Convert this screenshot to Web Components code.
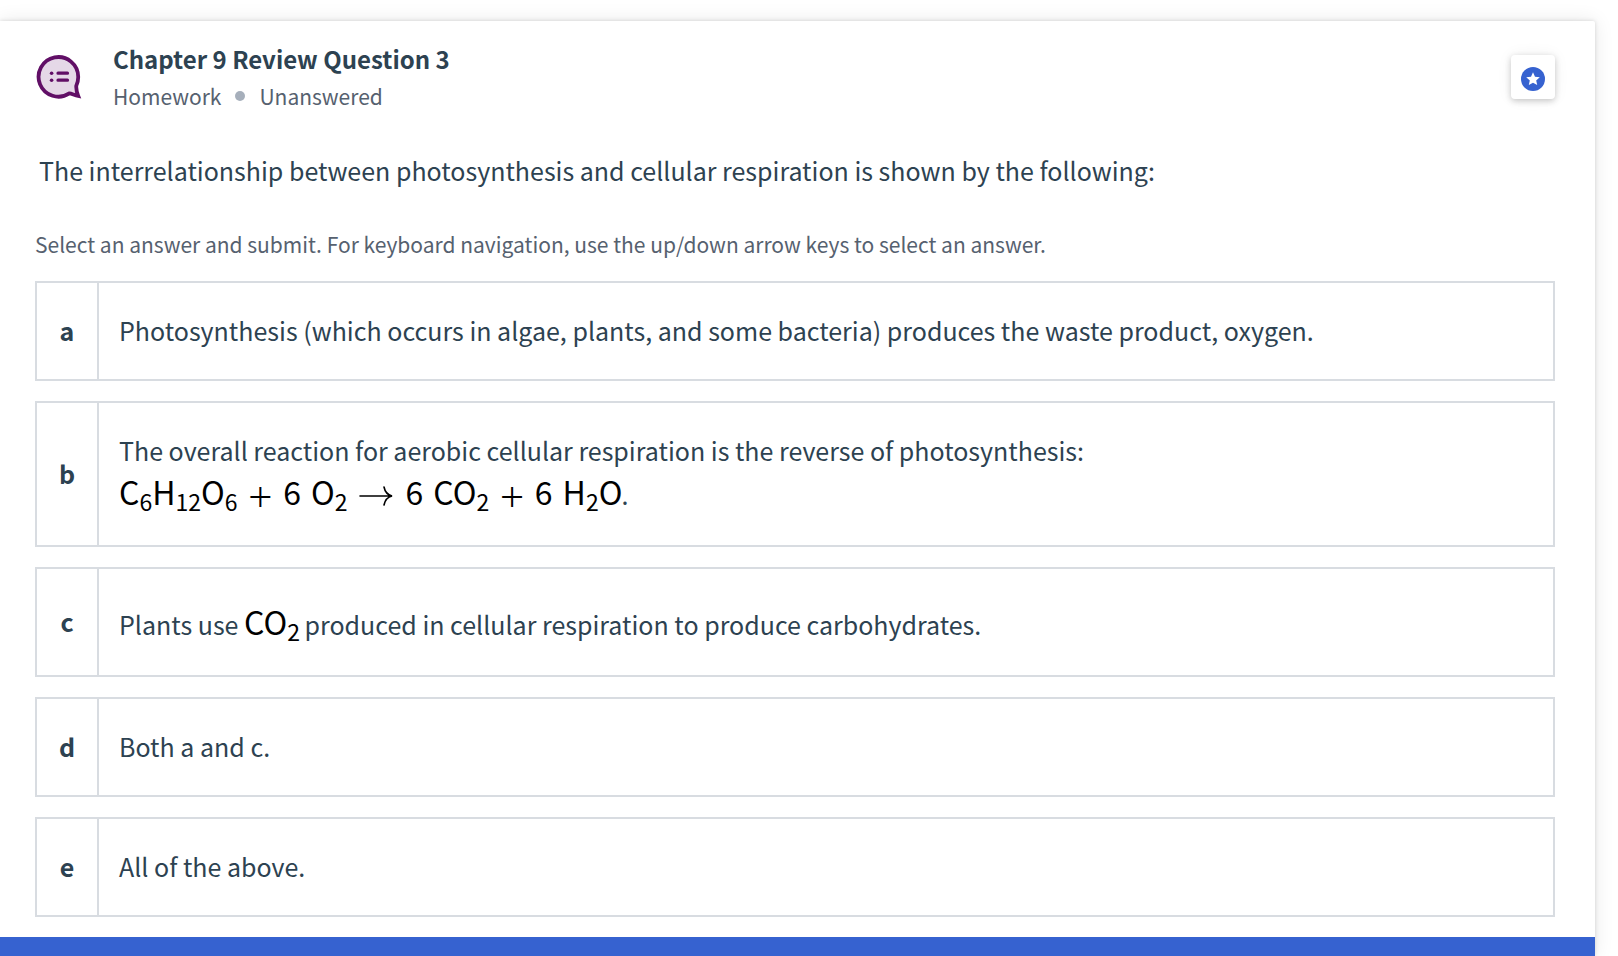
<!DOCTYPE html>
<html lang="en">
<head>
<meta charset="utf-8">
<title>Chapter 9 Review Question 3</title>
<style>
  body {
    margin: 0;
    background: #fff;
    color: #2d4251;
    font-family: "Noto Sans CJK SC", "Noto Sans", sans-serif;
    font-size: 25px;
    line-height: 36px;
    overflow-x: hidden;
  }
</style>
</head>
<body>
<question-card>
  <question-header slot="header" status="Unanswered" kind="Homework">Chapter 9 Review Question 3</question-header>
  <span slot="prompt">The interrelationship between photosynthesis and cellular respiration is shown by the following:</span>
  <answer-list>
    <answer-option letter="a">Photosynthesis (which occurs in algae, plants, and some bacteria) produces the waste product, oxygen.</answer-option>
    <answer-option letter="b">The overall reaction for aerobic cellular respiration is the reverse of photosynthesis:<br><chem-formula value="C_6 H_12 O_6 + 6~ O_2 > 6~ CO_2 + 6~ H_2 O"></chem-formula>.</answer-option>
    <answer-option letter="c">Plants use <chem-formula value="CO_2"></chem-formula> produced in cellular respiration to produce carbohydrates.</answer-option>
    <answer-option letter="d">Both a and c.</answer-option>
    <answer-option letter="e">All of the above.</answer-option>
  </answer-list>
</question-card>

<script>
class QuestionCard extends HTMLElement {
  constructor() {
    super();
    this.attachShadow({ mode: 'open' });
    this.shadowRoot.innerHTML = `
      <style>
        :host {
          display: block;
          padding: 21px 23px 0 0;
        }

        .card {
          display: flex;
          flex-direction: column;
          box-sizing: border-box;
          min-height: calc(100vh - 21px);
          border-radius: 0 2px 0 0;
          box-shadow: 0 0 4px rgba(0, 0, 0, 0.15), 0 0 20px rgba(0, 0, 0, 0.09);
        }

        .content {
          padding: 20px 40px 20px 35px;
        }

        .prompt {
          margin: 0;
          padding: 39px 4px 0;
        }

        .hint {
          margin: 0;
          padding: 40px 0 21px;
          color: #56616f;
          font-size: 21px;
          line-height: 32px;
        }

        .bar {
          flex: 1;
          background: #3662d0;
        }
      </style>
      <article class="card">
        <div class="content">
          <slot name="header"></slot>
          <p class="prompt"><slot name="prompt"></slot></p>
          <p class="hint">Select an answer and submit. For keyboard navigation, use the up/down arrow keys to select an answer.</p>
          <slot></slot>
        </div>
        <footer class="bar"></footer>
      </article>
    `;
  }
}

class QuestionHeader extends HTMLElement {
  constructor() {
    super();
    this.attachShadow({ mode: 'open' });
    this.shadowRoot.innerHTML = `
      <style>
        :host {
          display: flex;
          align-items: center;
        }

        .icon {
          flex: none;
          width: 48px;
          height: 48px;
          margin-right: 30px;
        }

        .text {
          flex: 1;
        }

        h1 {
          margin: 0;
          font-size: 24px;
          line-height: 36px;
          font-weight: 600;
        }

        .meta {
          display: flex;
          align-items: center;
          padding-top: 2px;
          color: #56616f;
          font-size: 21px;
          line-height: 34px;
        }

        .dot {
          width: 10px;
          height: 10px;
          margin: 0 14px;
          border-radius: 50%;
          background: #a6afbb;
        }

        button {
          display: grid;
          place-items: center;
          width: 44px;
          height: 44px;
          padding: 4px 0 0;
          border: 0;
          border-radius: 4px;
          background: #fff;
          box-shadow: 0 2px 6px rgba(0, 0, 0, 0.2), 0 0 16px rgba(0, 0, 0, 0.06);
          cursor: pointer;
        }
      </style>
      <svg class="icon" viewBox="0 0 48 48" aria-hidden="true">
        <path d="M43.2 23.9A19.8 19.8 0 1 0 34.3 40.4C36.6 40.6 39.6 42.2 43.2 42.9C42 39.9 41 35.9 41.3 32.7A19.8 19.8 0 0 0 43.2 23.9Z" fill="#e5d8e7" stroke="#610f66" stroke-width="3.8"/>
        <path d="M23 20.2H32.5M23 27.2H32.5" stroke="#610f66" stroke-width="3.2" stroke-linecap="round"/>
        <circle cx="16.6" cy="20.2" r="1.8" fill="#610f66"/>
        <circle cx="16.6" cy="27.2" r="1.8" fill="#610f66"/>
      </svg>
      <div class="text">
        <h1><slot></slot></h1>
        <div class="meta"><span class="kind"></span><span class="dot"></span><span class="status"></span></div>
      </div>
      <button type="button" aria-label="Bookmark question">
        <svg width="24" height="24" viewBox="0 0 24 24" aria-hidden="true">
          <circle cx="12" cy="12" r="12" fill="#3662d0"/>
          <path d="M12 5.3L14 9.7L18.8 10.2L15.2 13.4L16.2 18.1L12 15.7L7.8 18.1L8.8 13.4L5.2 10.2L10 9.7Z" fill="#fff"/>
        </svg>
      </button>
    `;
  }

  connectedCallback() {
    this.shadowRoot.querySelector('.kind').textContent = this.getAttribute('kind');
    this.shadowRoot.querySelector('.status').textContent = this.getAttribute('status');
  }
}

class AnswerOption extends HTMLElement {
  constructor() {
    super();
    this.attachShadow({ mode: 'open' });
    this.shadowRoot.innerHTML = `
      <style>
        :host {
          display: block;
        }

        label {
          position: relative;
          display: flex;
          border: 2px solid #d8dce1;
          cursor: pointer;
        }

        input {
          position: absolute;
          inset: 0;
          width: 100%;
          height: 100%;
          margin: 0;
          opacity: 0;
          cursor: pointer;
        }

        .letter {
          display: flex;
          align-items: center;
          justify-content: center;
          flex: none;
          width: 60px;
          padding-bottom: 2px;
          border-right: 2px solid #d8dce1;
          font-weight: 600;
        }

        .answer {
          flex: 1;
          padding: 29px 20px 31px;
        }

        label:has(input:checked) {
          border-color: #3662d0;
        }

        label:has(input:focus-visible) {
          outline: 2px solid #3662d0;
        }
      </style>
      <label>
        <input type="radio">
        <span class="letter"></span>
        <span class="answer"><slot></slot></span>
      </label>
    `;
    this.input = this.shadowRoot.querySelector('input');
  }

  connectedCallback() {
    this.input.value = this.getAttribute('letter');
    this.shadowRoot.querySelector('.letter').textContent = this.getAttribute('letter');
    this.input.addEventListener('change', () => {
      this.dispatchEvent(new CustomEvent('answer-selected', { bubbles: true }));
    });
  }

  select() {
    this.input.focus();
    this.input.click();
  }
}

class AnswerList extends HTMLElement {
  constructor() {
    super();
    this.attachShadow({ mode: 'open' });
    this.shadowRoot.innerHTML = `
      <style>
        :host {
          display: block;
        }

        .list {
          display: flex;
          flex-direction: column;
          gap: 20px;
        }
      </style>
      <div class="list" role="radiogroup" aria-label="Answers"><slot></slot></div>
    `;
  }

  connectedCallback() {
    // Each radio lives in its own shadow root, so the group is kept here
    this.addEventListener('answer-selected', (event) => {
      for (const option of this.children) {
        option.input.checked = option === event.target;
      }
    });

    this.addEventListener('keydown', (event) => {
      const step = { ArrowDown: 1, ArrowUp: -1 }[event.key];
      if (!step) return;
      event.preventDefault();
      const options = [...this.children];
      const index = options.indexOf(event.target);
      options[(index + step + options.length) % options.length].select();
    });
  }
}

// "_" starts a subscript, "~" a space, ">" the reaction arrow
class ChemFormula extends HTMLElement {
  constructor() {
    super();
    this.attachShadow({ mode: 'open' });
  }

  connectedCallback() {
    const arrow = '<svg width="34" height="24" viewBox="0 0 34 24" role="img" aria-label="yields"><path d="M1 13H32M25 4C26 9 29 12 33 13C29 14 26 17 25 22" fill="none" stroke="#000" stroke-width="1.6" stroke-linecap="round"/></svg>';
    const parts = this.getAttribute('value').split(' ').map((token) => {
      if (token === '+') return '<span class="plus">+</span>';
      if (token === '>') return arrow;
      if (token.endsWith('~')) return `<span class="count">${token.slice(0, -1)}</span>`;
      const [base, sub] = token.split('_');
      return sub ? `${base}<sub>${sub}</sub>` : base;
    });

    this.shadowRoot.innerHTML = `
      <style>
        :host {
          display: inline-block;
          margin-right: -1px;
          color: #000;
          font-size: 32px;
          line-height: 46px;
          white-space: nowrap;
        }

        sub {
          position: relative;
          top: 6px;
          font-size: 23px;
          line-height: 0;
          vertical-align: baseline;
        }

        .plus {
          margin: 0 8px;
          font-family: Inter, sans-serif;
          font-size: 46px;
          font-weight: 200;
          line-height: 0;
          vertical-align: -5px;
        }

        .count {
          margin-right: 10px;
        }

        svg {
          margin: 0 12px;
          vertical-align: -2px;
        }
      </style>${parts.join('')}`;
  }
}

customElements.define('question-card', QuestionCard);
customElements.define('question-header', QuestionHeader);
customElements.define('answer-option', AnswerOption);
customElements.define('answer-list', AnswerList);
customElements.define('chem-formula', ChemFormula);
</script>
</body>
</html>
